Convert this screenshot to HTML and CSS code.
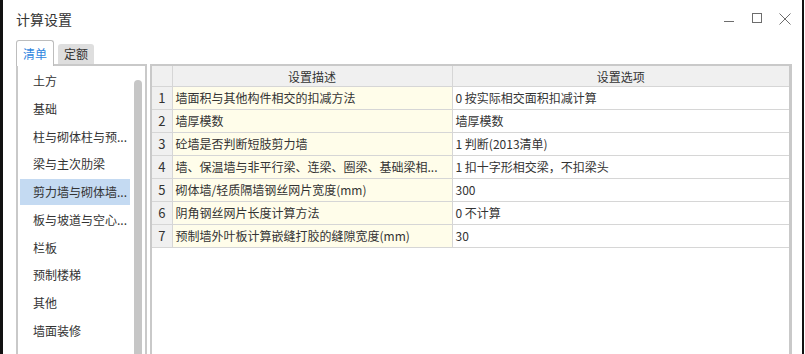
FILE: index.html
```html
<!DOCTYPE html>
<html lang="zh-CN">
<head>
  <meta charset="UTF-8">
  <title>计算设置</title>
  <link rel="stylesheet" href="styles.css">
</head>
<body>
  <div class="window">
    <div class="titlebar">
      <span class="title">计算设置</span>
      <div class="controls">
        <svg class="ctl" width="12" height="12" viewBox="0 0 12 12"><path d="M1 8.5h10" stroke="#6d6d6d" fill="none"/></svg>
        <svg class="ctl" width="12" height="12" viewBox="0 0 12 12"><rect x="1.5" y="0.5" width="9" height="9" stroke="#6d6d6d" fill="none"/></svg>
        <svg class="ctl" width="12" height="12" viewBox="0 0 12 12"><path d="M0.5 0.5l11 11M11.5 0.5l-11 11" stroke="#6d6d6d" fill="none"/></svg>
      </div>
    </div>

    <div class="tabs">
      <div class="tab active">清单</div>
      <div class="tab">定额</div>
    </div>

    <div class="content">
      <div class="side">
        <ul class="list">
          <li>土方</li>
          <li>基础</li>
          <li>柱与砌体柱与预...</li>
          <li>梁与主次肋梁</li>
          <li class="selected">剪力墙与砌体墙...</li>
          <li>板与坡道与空心...</li>
          <li>栏板</li>
          <li>预制楼梯</li>
          <li>其他</li>
          <li>墙面装修</li>
        </ul>
        <div class="scroll"><div class="thumb"></div></div>
      </div>

      <div class="grid">
        <table>
          <colgroup>
            <col class="c-num">
            <col class="c-desc">
            <col class="c-opt">
          </colgroup>
          <thead>
            <tr><th></th><th>设置描述</th><th>设置选项</th></tr>
          </thead>
          <tbody>
            <tr><td class="num">1</td><td class="desc">墙面积与其他构件相交的扣减方法</td><td>0 按实际相交面积扣减计算</td></tr>
            <tr><td class="num">2</td><td class="desc">墙厚模数</td><td>墙厚模数</td></tr>
            <tr><td class="num">3</td><td class="desc">砼墙是否判断短肢剪力墙</td><td>1 判断(2013清单)</td></tr>
            <tr><td class="num">4</td><td class="desc">墙、保温墙与非平行梁、连梁、圈梁、基础梁相...</td><td>1 扣十字形相交梁，不扣梁头</td></tr>
            <tr><td class="num">5</td><td class="desc">砌体墙/轻质隔墙钢丝网片宽度(mm)</td><td>300</td></tr>
            <tr><td class="num">6</td><td class="desc">阴角钢丝网片长度计算方法</td><td>0 不计算</td></tr>
            <tr><td class="num">7</td><td class="desc">预制墙外叶板计算嵌缝打胶的缝隙宽度(mm)</td><td>30</td></tr>
          </tbody>
        </table>
      </div>
    </div>
  </div>
</body>
</html>
```

FILE: styles.css
```css
html, body {
  margin: 0;
  height: 100%;
  background: #ffffff;
  overflow: hidden;
}
body {
  font-family: "Noto Sans CJK SC", "Open Sans", sans-serif;
  font-size: 12px;
  color: #333333;
}
.window {
  width: 804px;
  height: 354px;
  border-left: 3px solid #111111;
  border-right: 2px solid #111111;
  background: #ffffff;
  padding: 0 10px 0 13px;
  box-sizing: border-box;
  display: flex;
  flex-direction: column;
}
.titlebar {
  height: 39px;
  display: flex;
  align-items: flex-start;
  justify-content: space-between;
}
.title {
  font-size: 14px;
  margin-top: 9px;
  color: #333333;
  line-height: 20px;
}
.controls {
  display: flex;
  gap: 16px;
  margin-top: 13px;
  margin-right: 1px;
}
.ctl {
  display: block;
}
.tabs {
  display: flex;
  align-items: flex-end;
  gap: 4px;
  height: 25px;
}
.tab {
  height: 20px;
  line-height: 20px;
  padding: 0 6px;
  background: #dedede;
  color: #333333;
  border-radius: 3px 3px 0 0;
  font-size: 12px;
}
.tab.active {
  height: 26px;
  line-height: 25px;
  padding: 0 6px;
  background: #ffffff;
  color: #2f86e0;
  border: 1px solid #bdbdbd;
  border-bottom: none;
  box-sizing: border-box;
  margin-bottom: -2px;
  position: relative;
  z-index: 1;
}
.content {
  flex: 1;
  display: flex;
  gap: 3px;
  min-height: 0;
}
.side {
  width: 131px;
  border: 2px solid #c9c9c9;
  border-bottom: none;
  display: flex;
  box-sizing: border-box;
}
.list {
  list-style: none;
  margin: 0;
  padding: 2px 0 0 2px;
  flex: 1;
}
.list li {
  height: 26px;
  line-height: 26px;
  margin-bottom: 1.75px;
  padding-left: 13px;
  white-space: nowrap;
  width: 110px;
  box-sizing: border-box;
}
.list li.selected {
  background: #c4daf2;
}
.scroll {
  width: 8px;
  margin-right: 3px;
  padding-top: 14px;
}
.thumb {
  height: 100%;
  background: #c6c6c6;
  border-radius: 4px 4px 0 0;
}
.grid {
  flex: 1;
  border: 2px solid #c9c9c9;
  border-right-width: 3px;
  border-bottom: none;
}
table {
  border-collapse: collapse;
  table-layout: fixed;
  width: 100%;
}
.c-num { width: 20px; }
.c-desc { width: 280px; }
th, td {
  border: 1px solid #d6d6d6;
  padding: 0 0 0 3px;
  white-space: nowrap;
  overflow: hidden;
  font-weight: normal;
  text-align: left;
}
tr > :first-child { border-left: none; }
tr > :last-child { border-right: none; }
thead tr th { border-top: none; }
th {
  height: 20px;
  background: #f0f0f0;
  text-align: center;
  padding: 0;
  color: #333333;
}
td {
  height: 22px;
  line-height: 22px;
}
td.num {
  background: #f0f0f0;
  text-align: center;
  padding: 0;
  font-size: 13px;
}
td.desc {
  background: #fffdea;
}
```
